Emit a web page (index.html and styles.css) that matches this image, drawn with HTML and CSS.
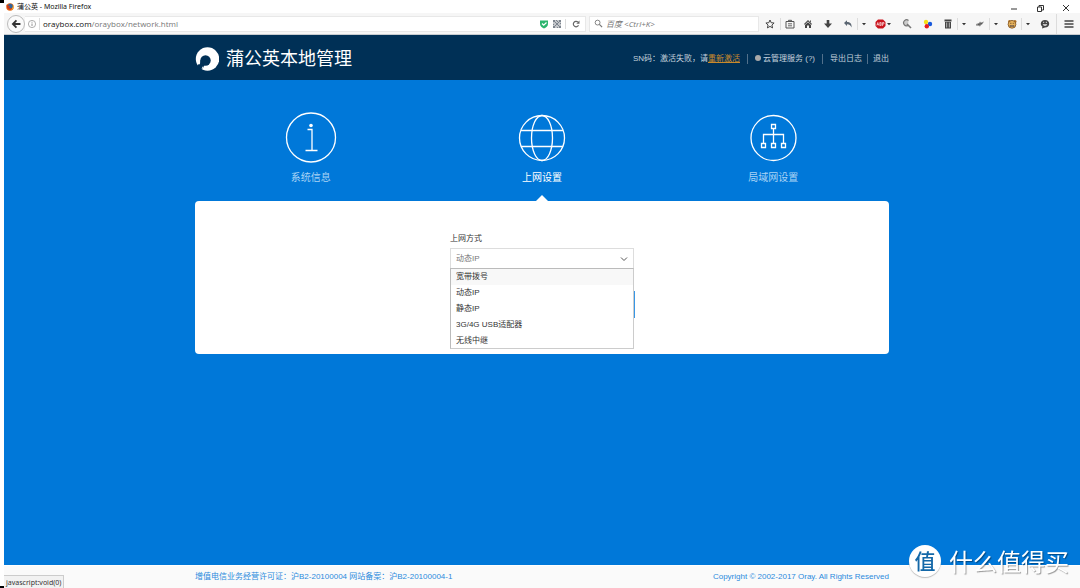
FILE: index.html
```html
<!DOCTYPE html>
<html lang="zh-CN">
<head>
<meta charset="utf-8">
<title>蒲公英</title>
<link rel="stylesheet" href="styles.css">
</head>
<body>
<div class="window">
  <div class="titlebar">
    <svg class="firefox" viewBox="0 0 16 16"><circle cx="8" cy="8" r="7.5" fill="#e66a16"/><circle cx="8.500" cy="6.500" r="5" fill="#31659c"/><path d="M1 3l3 2 4 1-2 3 3 2 4-1c-1 4-9 5-11-1z" fill="#d13a16"/><path d="M14 3c2 5 1 9-4 12 3-4 4-7 4-12z" fill="#f9c332"/></svg>
    <span class="window-title">蒲公英 - Mozilla Firefox</span>
    <div class="window-controls">
      <button type="button" aria-label="最小化"><svg viewBox="0 0 10 10"><path d="M2 6h6"/></svg></button>
      <button type="button" aria-label="还原"><svg viewBox="0 0 10 10"><path d="M2.500 4h4v4.500h-4zM4 4V2.500h4.500V7h-2"/></svg></button>
      <button type="button" aria-label="关闭"><svg viewBox="0 0 10 10"><path d="M2 2l6 6M8 2l-6 6"/></svg></button>
    </div>
  </div>

  <div class="toolbar">
    <button type="button" class="back" aria-label="后退"><svg viewBox="0 0 18 18"><path d="M9.500 5L5.500 9l4 4M6 9h8" fill="none" stroke="#333" stroke-width="2"/></svg></button>
    <div class="address">
      <svg class="info" viewBox="0 0 10 10"><circle cx="5" cy="5" r="3.600" fill="none" stroke="#999" stroke-width=".8"/><path d="M5 4.500v2.500M5 2.800v.9" stroke="#888" stroke-width=".9"/></svg>
      <div class="url"><strong>oraybox.com</strong>/oraybox/network.html</div>
      <svg class="address-icon" viewBox="0 0 10 10"><path d="M1 1.500h8V5c0 2-2 3.500-4 4.500C3 8.500 1 7 1 5z" fill="#2cb56e"/><path d="M3 4.500l1.700 1.700L7.500 3.500" fill="none" stroke="#fff" stroke-width="1.200"/></svg>
      <svg class="address-icon" viewBox="0 0 10 10"><path d="M1 1h8v8H1z" fill="#c3c6ca"/><path d="M1 1h2v2H1zM4 1h1v1H4zM7 1h2v2H7zM1 7h2v2H1zM4 4h2v2H4zM7 7h2v2H7zM3 3h1v1H3zM6 3h1v1H6zM3 6h1v1H3zM6 6h1v1H6zM5 2h1v1H5zM1 5h1v1H1zM8 4h1v1H8zM5 8h1v1H5z" fill="#7c848e"/></svg>
      <button type="button" class="reload" aria-label="刷新"><svg viewBox="0 0 10 10"><path d="M7.500 6.200A2.700 2.700 0 1 1 7 3.200" fill="none" stroke="#666" stroke-width="1.200"/><path d="M8.500 1.500v3.200H5.300z" fill="#666"/></svg></button>
    </div>
    <div class="search">
      <svg viewBox="0 0 10 10"><circle cx="4" cy="4" r="2.700" fill="none" stroke="#777"/><path d="M6 6l3 3" stroke="#777" stroke-width="1.400"/></svg>
      <input type="text" aria-label="搜索" placeholder="百度 &lt;Ctrl+K&gt;">
    </div>
    <div class="tools">
      <button type="button" class="tool" aria-label="收藏"><svg viewBox="0 0 10 10"><path d="M5 1l1.200 2.700 2.900.3-2.200 2 .7 2.900L5 7.400 2.400 8.900 3.100 6 .9 4l2.900-.3z" fill="none" stroke="#444"/></svg></button>
      <button type="button" class="tool narrow divided" aria-label="书签"><svg viewBox="0 0 10 10"><path d="M1 2.500h8V9H1z" fill="none" stroke="#555"/><path d="M3.500 2.500V1.300h3v1.200" fill="none" stroke="#555"/><path d="M3 4.800h4M3 6.800h4" stroke="#555" stroke-width=".9"/></svg></button>
      <button type="button" class="tool" aria-label="主页"><svg viewBox="0 0 10 10"><path d="M5 1l4 4-.7.700L5 2.600 1.700 5.700 1 5zM2 6l3-2.700L8 6v3H6V6.500H4V9H2zM7 1.500h1v2l-1-1z" fill="#444"/></svg></button>
      <button type="button" class="tool" aria-label="下载"><svg viewBox="0 0 10 10"><path d="M3.700 1h2.600v3.500H9L5 9 1 4.500h2.700z" fill="#444"/></svg></button>
      <button type="button" class="tool mid" aria-label="撤销"><svg viewBox="0 0 10 10"><path d="M1 4l3-2.700v1.700c3 0 5 1.500 4.500 5.500C7.500 6 6.500 5.200 4 5.200v1.700z" fill="#5b6672"/></svg></button>
      <button type="button" class="tool drop divided" aria-label="撤销菜单"><svg viewBox="0 0 10 10"><path d="M3 4h4L5 6.300z" fill="#333"/></svg></button>
      <button type="button" class="tool abp" aria-label="广告拦截"><svg viewBox="0 0 26 12"><path d="M8 1.500h5L15.500 4v4L13 10.500H8L5.500 8V4z" fill="#c9141e"/><path d="M6.800 7.500l1-3 1 3M7.200 6.500h1.200M9.800 4.500v3h1.400v-3zM9.800 6h1.400M12.500 8V4.500H14V6h-1.500" fill="none" stroke="#fff" stroke-width=".6"/><path d="M17 5h4l-2 2.300z" fill="#333"/></svg></button>
      <button type="button" class="tool wide" aria-label="查找"><svg viewBox="0 0 10 10"><path d="M6.500 1.500A3 3 0 1 0 6 6.500" fill="#ccc" stroke="#777" stroke-width="1.200"/><path d="M5 5l4 4" stroke="#777" stroke-width="1.600"/></svg></button>
      <button type="button" class="tool" aria-label="取色"><svg viewBox="0 0 10 10"><circle cx="3" cy="3" r="2.200" fill="#f6df13"/><circle cx="7" cy="5" r="2.200" fill="#1859dc"/><circle cx="3.800" cy="7.200" r="2.200" fill="#e81c1c"/></svg></button>
      <button type="button" class="tool mid" aria-label="清理"><svg viewBox="0 0 10 10"><path d="M1.500.5h7v2h-7zM2 3h6v6.500H2z" fill="#444"/><path d="M3.700 3.500v5M6.300 3.500v5" stroke="#bbb"/></svg></button>
      <button type="button" class="tool drop divided" aria-label="清理菜单"><svg viewBox="0 0 10 10"><path d="M3 4h4L5 6.300z" fill="#333"/></svg></button>
      <button type="button" class="tool mid" aria-label="脚本"><svg viewBox="0 0 10 10"><path d="M1 5l3-1 1-1.500 1 1L9 2.500 7.500 5 6 6 5 7.500 3 6.500 1.500 7z" fill="#888"/><path d="M3 5.500l4-1" stroke="#444" stroke-width=".8"/></svg></button>
      <button type="button" class="tool drop divided" aria-label="脚本菜单"><svg viewBox="0 0 10 10"><path d="M3 4h4L5 6.300z" fill="#333"/></svg></button>
      <button type="button" class="tool mid" aria-label="用户脚本"><svg viewBox="0 0 10 10"><circle cx="2.500" cy="2.500" r="1.500" fill="#b57428"/><circle cx="8" cy="2.500" r="1.500" fill="#b57428"/><circle cx="5" cy="5.300" r="3.900" fill="#e8b45e" stroke="#7a4c1a" stroke-width=".8"/><path d="M3 4.300h1.500M5.700 4.300h1.500M3 6.500h4v1H3z" stroke="#4b3118" stroke-width=".6" fill="#fff"/></svg></button>
      <button type="button" class="tool drop divided" aria-label="用户脚本菜单"><svg viewBox="0 0 10 10"><path d="M3 4h4L5 6.300z" fill="#333"/></svg></button>
      <button type="button" class="tool wide" aria-label="聊天"><svg viewBox="0 0 10 10"><path d="M5 1c2.500 0 4.200 1.600 4.200 3.700S7.500 8.400 5 8.400L2 9.500l.4-2C1.300 6.900.8 5.800.8 4.700.8 2.600 2.500 1 5 1z" fill="#444"/><path d="M3 3.300h1.200M5.800 3.300H7" stroke="#eee" stroke-width=".9"/><path d="M2.700 5.200c1 2 3.600 2 4.600 0z" fill="#eee"/></svg></button>
      <button type="button" class="tool menu divided" aria-label="菜单"><svg viewBox="0 0 10 10"><path d="M.5 2h9M.5 5h9M.5 8h9" stroke="#444" stroke-width="1.500"/></svg></button>
    </div>
  </div>

  <header class="site-header">
    <div class="wrap header-row">
      <div class="brand">
        <svg viewBox="0 0 24 24"><circle cx="12.500" cy="12" r="11.700" fill="#fff"/><circle cx="10.500" cy="13.500" r="5.200" fill="#003056"/><path d="M5.400 13L4.500 21.500l1.500 1.600L8.700 20 9.500 18z" fill="#003056"/><path d="M5.500 18.500l1 .8-1.500 2.500-3-3 2.200-2z" fill="#003056"/><path d="M8 19.500l-1 2" stroke="#fff" stroke-width=".8"/></svg>
        <h1>蒲公英本地管理</h1>
      </div>
      <nav class="account">
        <span class="sn">SN码：激活失败，请<a href="#" class="reactivate">重新激活</a></span>
        <a href="#" class="cloud"><i class="dot"></i>云管理服务 (?)</a>
        <a href="#" class="logs">导出日志</a>
        <a href="#" class="logout">退出</a>
      </nav>
    </div>
  </header>

  <main class="content">
    <div class="wrap">
      <nav class="tabs">
        <a href="#" class="tab">
          <svg viewBox="0 0 52 52"><circle cx="26" cy="25.500" r="24.500"/><path d="M22.500 17.500H27V38.500M20.500 38.500h12"/><circle cx="26" cy="13.500" r="1.800" fill="#fff" stroke="none"/></svg>
          系统信息
        </a>
        <a href="#" class="tab active">
          <svg viewBox="0 0 52 52"><circle cx="26" cy="26" r="22.500"/><ellipse cx="26" cy="26" rx="10.500" ry="22.500"/><path d="M5 18.500h42M5 34.500h42"/></svg>
          上网设置
        </a>
        <a href="#" class="tab">
          <svg viewBox="0 0 52 52"><circle cx="26.500" cy="26" r="22.500"/><path d="M24.500 12.500h4v4h-4zM14.500 31.500h4v4h-4zM24.500 31.500h4v4h-4zM34.500 31.500h4v4h-4zM26.500 16.500v15M16.500 31.500v-9h20v9"/></svg>
          局域网设置
        </a>
      </nav>
      <section class="card">
        <form class="form">
          <label for="mode">上网方式</label>
          <div class="combo">
            <input id="mode" type="text" role="combobox" aria-expanded="true" aria-controls="modes" value="动态IP" autofocus>
            <svg viewBox="0 0 10 10"><path d="M2 3.500l3 3 3-3" fill="none" stroke="#555"/></svg>
            <ul id="modes" class="options" role="listbox">
              <li role="option" aria-selected="true">宽带拨号</li>
              <li role="option">动态IP</li>
              <li role="option">静态IP</li>
              <li role="option">3G/4G USB适配器</li>
              <li role="option">无线中继</li>
            </ul>
          </div>
          <button type="submit" class="save" aria-label="保存"></button>
        </form>
      </section>
    </div>
  </main>

  <footer class="site-footer">
    <div class="wrap footer-row">
      <span>增值电信业务经营许可证：沪B2-20100004 网站备案：沪B2-20100004-1</span>
      <span>Copyright © 2002-2017 Oray. All Rights Reserved</span>
    </div>
  </footer>
</div>
<div class="status">javascript:void(0)</div>
<div class="watermark"><span class="seal">值</span><span class="mark">什么值得买</span></div>
<script src="focus.js"></script>
</body>
</html>
```

FILE: focus.js
```js
// Open with the caret after the current value.
const mode = document.getElementById("mode");
mode.focus();
mode.setSelectionRange(mode.value.length, mode.value.length);
```

FILE: styles.css
```css
* { box-sizing: border-box; }

body {
  margin: 0;
  padding-left: 4px;
  background:
    linear-gradient(#000, #000) left top / 4px 3px no-repeat,
    linear-gradient(#000, #000) left bottom / 4px 2px no-repeat,
    #fff;
  font: 8px/12px "Liberation Sans", "Noto Sans CJK SC", sans-serif;
  color: #333;
}

button, input { font: inherit; color: inherit; border: 0; padding: 0; background: none; outline: 0; }
a { color: inherit; text-decoration: none; }
svg { display: block; flex: none; }

.window { display: flex; flex-direction: column; min-height: 100vh; }

/* browser chrome */
.titlebar { display: flex; align-items: center; height: 13px; padding-left: 2px; font-family: "Noto Sans", "Noto Sans CJK SC", sans-serif; font-size: 7px; color: #111; }
.firefox { width: 8px; height: 8px; }
.window-title { margin-left: 3px; }
.window-controls { display: flex; margin-left: auto; gap: 16px; padding: 3px 9px 0 0; }
.window-controls svg { width: 10px; height: 10px; fill: none; stroke: #333; }

.toolbar { display: flex; align-items: center; height: 22px; background: #f6f6f6; border-bottom: 1px solid #c8ccd0; font-family: "Open Sans", "Noto Sans CJK SC", sans-serif; }
.back { width: 18px; height: 18px; margin-left: 3px; background: #fbfbfb; border: 1px solid #bbb; border-radius: 50%; }
.back svg { width: 16px; height: 16px; }
.address { display: flex; align-items: center; flex: 1; height: 16px; padding-left: 2px; background: #fff; border: 1px solid #e8e8e8; border-left: 0; }
.info { width: 10px; height: 10px; }
.url { flex: 1; margin-left: 2px; padding-left: 3px; border-left: 1px solid #ddd; color: #777; }
.url strong { font-weight: 400; color: #111; }
.address-icon { width: 10px; height: 10px; margin-right: 3px; }
.reload { display: flex; justify-content: center; width: 20px; border-left: 1px solid #ddd; }
.reload svg { width: 10px; height: 10px; }
.search { display: flex; align-items: center; gap: 3px; width: 170px; height: 16px; margin: 0 1px 0 3px; padding-left: 4px; background: #fff; border: 1px solid #e8e8e8; }
.search svg { width: 9px; height: 9px; }
.search input { flex: 1; min-width: 0; font-style: italic; }
.search input::placeholder { color: #777; opacity: 1; }
.tools { display: flex; align-items: center; }
.tool { display: flex; align-items: center; justify-content: center; width: 20px; height: 12px; }
.tool svg { width: 10px; height: 10px; }
.divided { border-left: 1px solid #dcdcdc; }
.narrow { width: 18px; }
.mid { width: 19px; }
.drop { width: 13px; }
.wide { width: 22px; }
.abp { width: 26px; }
.abp svg { width: 26px; height: 12px; }
.menu { width: 24px; height: 20px; }

/* site header */
.wrap { width: 64.5%; margin: 0 auto; }
.site-header { background: #003056; color: #c3d0dc; }
.header-row { display: flex; align-items: center; justify-content: space-between; height: 45px; padding-top: 2px; }
.brand { display: flex; align-items: center; gap: 7px; }
.brand svg { width: 24px; height: 24px; }
.brand h1 { margin: 0; font-size: 18px; line-height: 24px; font-weight: 400; color: #fff; }
.account { display: flex; align-items: center; line-height: 10px; }
.account a + a, .sn + a { border-left: 1px solid #52708b; }
.reactivate { color: #c98a2b; text-decoration: underline; }
.cloud { margin-left: 7px; padding: 0 7px; }
.dot { display: inline-block; width: 6px; height: 6px; margin-right: 2px; border-radius: 50%; background: #a9a9a9; }
.logs { padding: 0 5px 0 7px; }
.logout { padding-left: 5px; }

/* tabs and form */
.content { flex: 1; background: #0078d9; }
.tabs { display: grid; grid-template-columns: repeat(3, 1fr); padding-top: 32px; }
.tab { display: flex; flex-direction: column; align-items: center; gap: 6px; height: 89px; font-size: 10px; line-height: 16px; color: #a9d3f5; }
.tab svg { width: 52px; height: 52px; fill: none; stroke: #fff; stroke-width: 1.300; }
.active { position: relative; color: #fff; }
.active::after { content: ""; position: absolute; bottom: 0; left: 50%; margin-left: -6px; border: 6px solid transparent; border-top: 0; border-bottom-color: #fff; }
.card { min-height: 153px; padding-top: 30px; background: #fff; border-radius: 4px; }
.form { width: 184px; margin: 0 auto; }
.form label { display: block; line-height: 16px; }
.combo { position: relative; display: flex; align-items: center; height: 21px; margin-top: 1px; padding-right: 4px; border: 1px solid #ddd; }
.combo input { flex: 1; min-width: 0; padding-left: 5px; color: #777; }
.combo svg { width: 10px; height: 10px; }
.options { position: absolute; top: 19px; left: -1px; right: -1px; margin: 0; padding: 0; list-style: none; background: #fff; border: 1px solid #bbb; border-right-color: #ccc; border-bottom-color: #ccc; }
.options li { padding-left: 5px; line-height: 15px; height: 16px; }
.options li:first-child { background: #f8f8f8; }
.options li:last-child { height: 15px; }
.save { display: block; width: 185px; height: 27px; margin-top: 22px; background: #3797e6; }

.site-footer { background: #fafafa; border-top: 1px solid #fff; color: #2b8add; }
.footer-row { display: flex; align-items: center; justify-content: space-between; height: 22px; }

/* overlays */
.status { position: fixed; left: 4px; bottom: 0; padding: 0 2px; height: 13px; line-height: 13px; font-family: "Noto Sans", sans-serif; font-size: 7px; background: #f2f2f2; border: 1px solid #ccc; border-left: 0; border-bottom: 0; }
.watermark { position: fixed; right: 11px; bottom: 11px; display: flex; align-items: center; gap: 8px; color: #fff; font-family: "Noto Sans CJK SC", sans-serif; }
.seal { width: 32px; height: 32px; border-radius: 50%; background: #fff; color: #1468a8; font-size: 21px; line-height: 30px; font-weight: 500; text-align: center; box-shadow: 0 1px 1px #8888; }
.mark { font-size: 24px; line-height: 32px; font-weight: 400; text-shadow: 1px 1px 1px #0006; }
```
